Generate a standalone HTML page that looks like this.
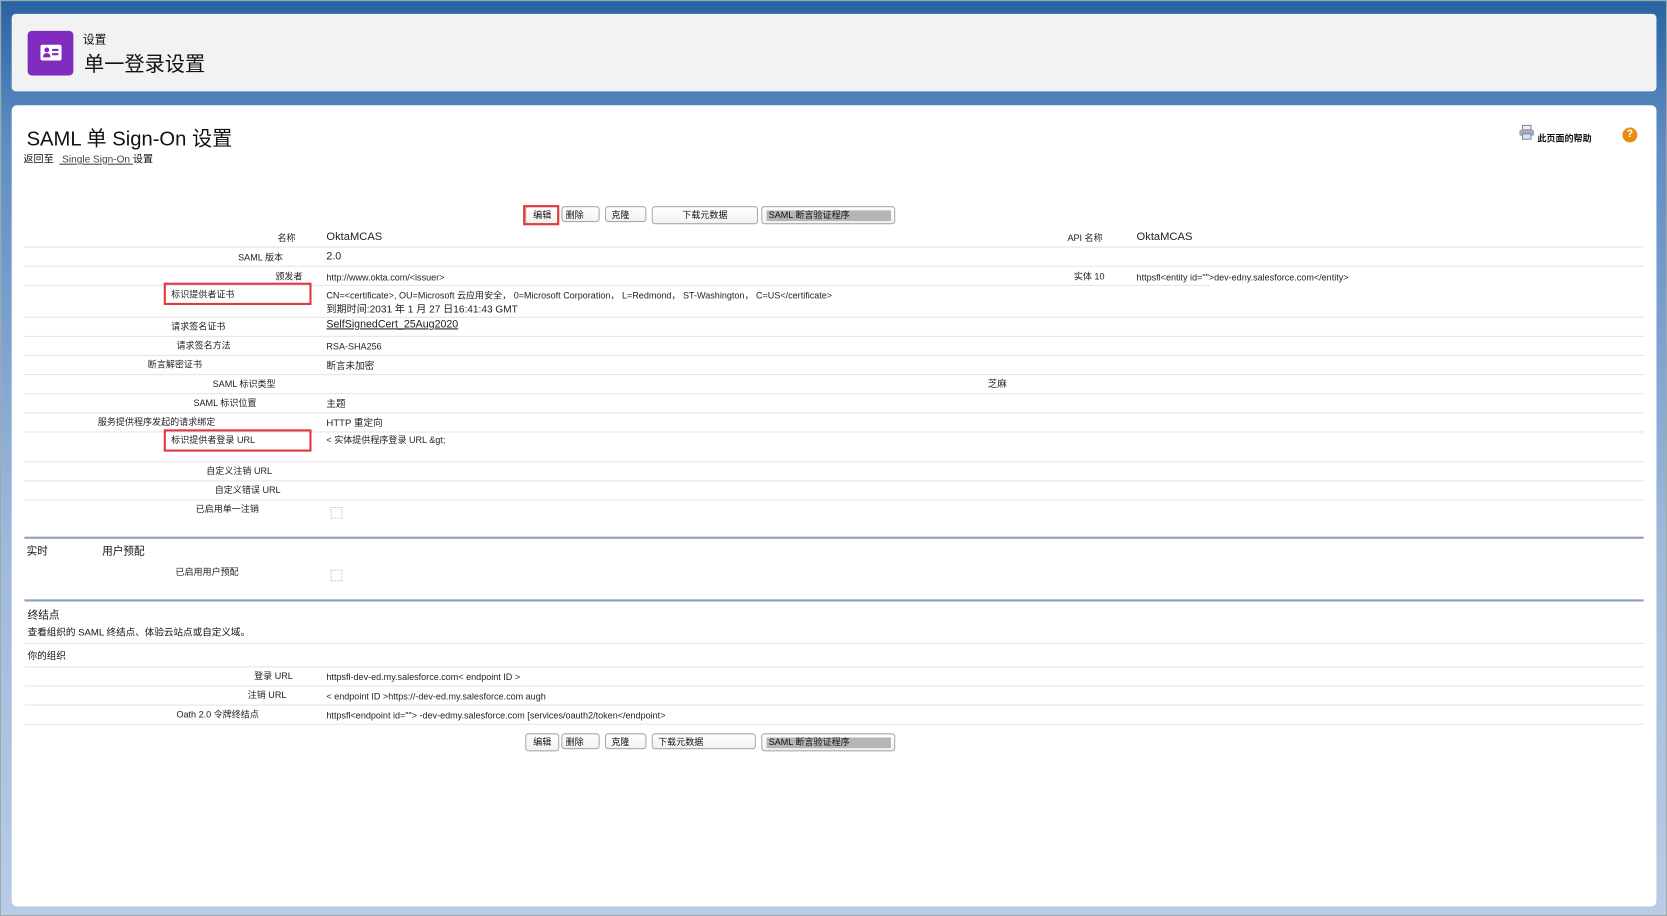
<!DOCTYPE html>
<html><head><meta charset="utf-8">
<style>
html,body{margin:0;padding:0;width:1667px;height:916px;overflow:hidden;background:#fff}
#w{position:absolute;left:0;top:0;width:1568px;height:862px;transform:scale(1.0632,1.0627);transform-origin:0 0;
 background:linear-gradient(180deg,#2a63a3 0%,#5e8cc2 15%,#9fb9dc 60%,#b9cbe6 100%);
 font-family:"Liberation Sans","Noto Sans CJK SC",sans-serif;color:#111;border:1px solid #9aa;box-sizing:border-box}
.a{position:absolute;white-space:nowrap}
.hc{position:absolute;left:10px;top:12px;width:1547px;height:73px;background:#f2f2f2;border-radius:4px}
.mc{position:absolute;left:10px;top:98px;width:1547px;height:754px;background:#fff;border-radius:5px}
.ln{position:absolute;left:22px;width:1523px;height:1px;background:#e4e4e4}
.lb{position:absolute;font-size:8.5px;white-space:nowrap;color:#222}
.v{position:absolute;font-size:9px;white-space:nowrap;color:#222}
.btn{position:absolute;height:15px;border:1px solid #a9a9a9;border-radius:3px;background:linear-gradient(#fff,#f1f1f1);font-size:8.5px;line-height:15px;box-sizing:content-box}
.rb{position:absolute;border:2px solid #e0393e;box-sizing:border-box}
.sec{position:absolute;left:22px;width:1523px;height:2px;background:#8d9dbf}
.cb{position:absolute;width:9px;height:9px;border:1px dotted #bbb}
</style></head><body>
<div id="w">
<div class="hc"></div>
<div class="a" style="left:25px;top:28px;width:43px;height:42px;background:#7f2bbd;border-radius:4px"></div>
<svg class="a" style="left:37px;top:41px" width="20" height="15" viewBox="0 0 20 15"><rect x="0" y="0" width="20" height="15" rx="2" fill="#fff"/><circle cx="6" cy="5" r="2.3" fill="#7f2bbd"/><path d="M2.5 12 Q2.5 8 6 8 Q9.5 8 9.5 12Z" fill="#7f2bbd"/><rect x="11" y="4" width="6" height="2" fill="#7f2bbd"/><rect x="11" y="8" width="6" height="2" fill="#7f2bbd"/></svg>
<div class="a" style="left:77px;top:28px;font-size:11px">设置</div>
<div class="a" style="left:78px;top:45px;font-size:19px">单一登录设置</div>
<div class="mc"></div>
<div class="a" style="left:24px;top:115px;font-size:19px">SAML 单 Sign-On 设置</div>
<div class="a" style="left:21px;top:141px;font-size:9.5px">返回至 &nbsp;<span style="color:#444;text-decoration:underline">&nbsp;Single Sign-On </span>设置</div>
<svg class="a" style="left:1427px;top:116px" width="16" height="15" viewBox="0 0 16 15"><rect x="4" y="1" width="8" height="4" fill="#eef" stroke="#889" /><rect x="1" y="5" width="14" height="6" rx="2" fill="#a3aab3"/><rect x="4" y="9" width="8" height="5" fill="#cfe6f5" stroke="#889"/></svg>
<div class="a" style="left:1445px;top:123px;font-size:8.5px;font-weight:bold">此页面的帮助</div>
<div class="a" style="left:1525px;top:119px;width:14px;height:14px;border-radius:50%;background:#e98c12;color:#fff;font-size:10px;font-weight:bold;text-align:center;line-height:14px">?</div>

<!-- buttons top -->
<div class="btn" style="left:493px;top:193px;width:30px;text-align:center">编辑</div>
<div class="rb" style="left:491px;top:192px;width:34px;height:19px"></div>
<div class="btn" style="left:527px;top:193px;width:36px;padding-left:3px;box-sizing:border-box">删除</div>
<div class="btn" style="left:568px;top:193px;width:39px;padding-left:5px;box-sizing:border-box">克隆</div>
<div class="btn" style="left:612px;top:193px;width:98px;text-align:center">下载元数据</div>
<div class="btn" style="left:715px;top:193px;width:124px"><div style="position:absolute;left:4px;top:3px;width:117px;height:10px;background:#b5b5b5"></div><span style="position:absolute;left:6px;top:0">SAML 断言验证程序</span></div>

<!-- rows -->
<div class="ln" style="top:231px"></div><div class="ln" style="top:249px"></div><div class="ln" style="top:267px;width:1115px"></div>
<div class="ln" style="top:297px"></div><div class="ln" style="top:315px"></div><div class="ln" style="top:333px"></div>
<div class="ln" style="top:351px"></div><div class="ln" style="top:369px"></div><div class="ln" style="top:387px"></div>
<div class="ln" style="top:405px"></div><div class="ln" style="top:433px"></div><div class="ln" style="top:451px"></div>
<div class="ln" style="top:469px"></div>

<div class="lb" style="left:260px;top:217px">名称</div><div class="v" style="left:306px;top:216px;font-size:10.5px">OktaMCAS</div>
<div class="lb" style="left:1003px;top:217px">API 名称</div><div class="v" style="left:1068px;top:216px;font-size:10.5px">OktaMCAS</div>
<div class="lb" style="left:223px;top:235px">SAML 版本</div><div class="v" style="left:306px;top:235px;font-size:10px">2.0</div>
<div class="lb" style="left:258px;top:253px">颁发者</div><div class="v" style="left:306px;top:255px;font-size:8.5px">http://www.okta.com/&lt;issuer&gt;</div>
<div class="lb" style="left:1009px;top:253px">实体 10</div><div class="v" style="left:1068px;top:255px;font-size:8.5px">httpsfl&lt;entity id=""&gt;dev-edny.salesforce.com&lt;/entity&gt;</div>
<div class="rb" style="left:153px;top:265px;width:139px;height:21px"></div>
<div class="lb" style="left:160px;top:270px">标识提供者证书</div>
<div class="v" style="left:306px;top:271px;font-size:8.5px">CN=&lt;certificate&gt;, OU=Microsoft 云应用安全， 0=Microsoft Corporation， L=Redmond， ST-Washington， C=US&lt;/certificate&gt;</div>
<div class="v" style="left:306px;top:282px;font-size:9.5px">到期时间:2031 年 1 月 27 日16:41:43 GMT</div>
<div class="lb" style="left:160px;top:300px">请求签名证书</div><div class="v" style="left:306px;top:299px;font-size:10px;text-decoration:underline">SelfSignedCert_25Aug2020</div>
<div class="lb" style="left:165px;top:318px">请求签名方法</div><div class="v" style="left:306px;top:320px;font-size:8.5px">RSA-SHA256</div>
<div class="lb" style="left:138px;top:336px">断言解密证书</div><div class="v" style="left:306px;top:336px">断言未加密</div>
<div class="lb" style="left:199px;top:354px">SAML 标识类型</div><div class="v" style="left:928px;top:353px">芝麻</div>
<div class="lb" style="left:181px;top:372px">SAML 标识位置</div><div class="v" style="left:306px;top:372px">主题</div>
<div class="lb" style="left:91px;top:390px">服务提供程序发起的请求绑定</div><div class="v" style="left:306px;top:390px">HTTP 重定向</div>
<div class="rb" style="left:153px;top:403px;width:139px;height:21px"></div>
<div class="lb" style="left:160px;top:407px">标识提供者登录 URL</div><div class="v" style="left:306px;top:407px;font-size:8.5px">&lt; 实体提供程序登录 URL &amp;gt;</div>
<div class="lb" style="left:193px;top:436px">自定义注销 URL</div>
<div class="lb" style="left:201px;top:454px">自定义错误 URL</div>
<div class="lb" style="left:183px;top:472px">已启用单一注销</div><div class="cb" style="left:310px;top:476px"></div>

<div class="sec" style="top:504px"></div>
<div class="a" style="left:24px;top:509px;font-size:10px">实时</div>
<div class="a" style="left:95px;top:509px;font-size:10px">用户预配</div>
<div class="lb" style="left:164px;top:531px">已启用用户预配</div><div class="cb" style="left:310px;top:535px"></div>
<div class="sec" style="top:563px"></div>
<div class="a" style="left:25px;top:569px;font-size:10px">终结点</div>
<div class="a" style="left:25px;top:587px;font-size:9px">查看组织的 SAML 终结点、体验云站点或自定义域。</div>
<div class="ln" style="top:604px"></div>
<div class="a" style="left:25px;top:609px;font-size:9px">你的组织</div>
<div class="ln" style="top:626px"></div>
<div class="lb" style="left:238px;top:629px">登录 URL</div><div class="v" style="left:306px;top:631px;font-size:8.5px">httpsfl-dev-ed.my.salesforce.com&lt; endpoint ID &gt;</div>
<div class="ln" style="top:644px"></div>
<div class="lb" style="left:232px;top:647px">注销 URL</div><div class="v" style="left:306px;top:649px;font-size:8.5px">&lt; endpoint ID &gt;https://-dev-ed.my.salesforce.com augh</div>
<div class="ln" style="top:662px"></div>
<div class="lb" style="left:165px;top:665px">Oath 2.0 令牌终结点</div><div class="v" style="left:306px;top:667px;font-size:8.5px">httpsfl&lt;endpoint id=""&gt; -dev-edmy.salesforce.com [services/oauth2/token&lt;/endpoint&gt;</div>
<div class="ln" style="top:680px"></div>

<div class="btn" style="left:493px;top:689px;width:30px;text-align:center">编辑</div>
<div class="btn" style="left:527px;top:689px;width:36px;padding-left:3px;box-sizing:border-box">删除</div>
<div class="btn" style="left:568px;top:689px;width:39px;padding-left:5px;box-sizing:border-box">克隆</div>
<div class="btn" style="left:612px;top:689px;width:98px;padding-left:5px;box-sizing:border-box">下载元数据</div>
<div class="btn" style="left:715px;top:689px;width:124px"><div style="position:absolute;left:4px;top:3px;width:117px;height:10px;background:#b5b5b5"></div><span style="position:absolute;left:6px;top:0">SAML 断言验证程序</span></div>
</div>
</body></html>
